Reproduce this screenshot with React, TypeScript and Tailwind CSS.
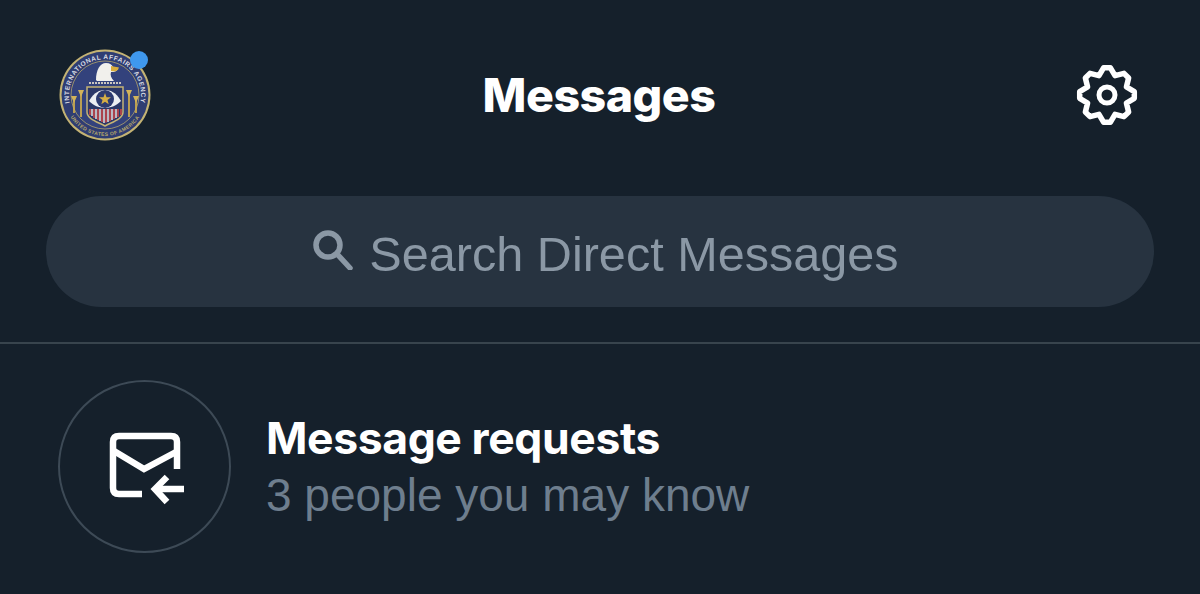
import React from 'react';

// eight-toothed gear outline, centred on 32,32: two corners per tooth, one valley between teeth
const gearPoints = Array.from({ length: 8 }, (_, i) => {
  const base = (i * Math.PI) / 4 - Math.PI / 2;
  const spots: [number, number][] = [
    [base - 0.12, 27.5],
    [base + 0.12, 27.5],
    [base + Math.PI / 8, 21],
  ];
  return spots.map(([a, r]) => `${(32 + r * Math.cos(a)).toFixed(2)},${(32 + r * Math.sin(a)).toFixed(2)}`).join(' ');
}).join(' ');

function Seal() {
  return (
    <svg viewBox="0 0 92 92" className="w-[92px] h-[92px]">
      <defs>
        <path id="sealTop" d="M 14.8 64 A 36 36 0 1 1 77.2 64" />
        <path id="sealBottom" d="M 7.5 60 A 41 41 0 0 0 84.5 60" />
      </defs>
      <circle cx="46" cy="46" r="45.5" fill="#c4b374" />
      <circle cx="46" cy="46" r="43.5" fill="#2f3d72" />
      <circle cx="46" cy="46" r="34" fill="#33427c" stroke="#b3a56d" strokeWidth="0.8" />
      <text fontSize="6.6" fontWeight="700" fill="#d9dbe2" fontFamily="'Liberation Sans', sans-serif">
        <textPath href="#sealTop" startOffset="50%" textAnchor="middle" letterSpacing="0.55">
          INTERNATIONAL AFFAIRS AGENCY
        </textPath>
      </text>
      <text fontSize="5" fontWeight="700" fill="#b9a96a" fontFamily="'Liberation Sans', sans-serif">
        <textPath href="#sealBottom" startOffset="50%" textAnchor="middle" letterSpacing="0.4">
          UNITED STATES OF AMERICA
        </textPath>
      </text>
      {/* eagle */}
      <path d="M37 31 C37 21 41 14 47 14 C51 14 53 16 54 18 L59 19 C58 23 55 23 52 23 C51 26 52 29 55 32 L38 32 Z" fill="#f1f0ec" />
      <path d="M52 17 L60 18.5 C59 22 56 23 52 22 Z" fill="#d8ac3c" />
      {/* perch */}
      <path d="M30 34 H62" stroke="#c9c5c0" strokeWidth="2" strokeDasharray="2 1" />
      {/* shield */}
      <path d="M28 38 H64 V63 C64 70 53 73 46 77 C39 73 28 70 28 63 Z" fill="#2b3768" stroke="#c4b374" strokeWidth="1.5" />
      <path d="M30 52 C35 43 41 41 46 41 C51 41 57 43 62 52 C57 57 51 59 46 59 C41 59 35 57 30 52 Z" fill="#eceef2" />
      <circle cx="46" cy="50" r="9" fill="#2d3a70" />
      <path d="M46 44 L47.5 48.2 L52 48.3 L48.5 51 L49.7 55.3 L46 52.8 L42.3 55.3 L43.5 51 L40 48.3 L44.5 48.2 Z" fill="#d6ae45" />
      <path d="M31 60 V66 M35 60 V69 M39 60 V71 M43 60 V73 M47 60 V73.5 M51 60 V72 M55 60 V70 M59 60 V68 M62 60 V66" stroke="#b8454a" strokeWidth="1.8" />
      <path d="M33 60 V67 M37 60 V70 M41 60 V72 M45 60 V74 M49 60 V73 M53 60 V71 M57 60 V69" stroke="#e9e4e0" strokeWidth="1.5" />
      {/* arrows either side */}
      <path d="M22 42 V68 M70 42 V68 M15 48 V64 M77 48 V64" stroke="#c9a94f" strokeWidth="1.8" />
      <path d="M19 41 H25 L22 48 Z M67 41 H73 L70 48 Z M12 47 H18 L15 54 Z M74 47 H80 L77 54 Z" fill="#d2b35a" />
    </svg>
  );
}

export default function App() {
  return (
    <div className="w-[1200px] h-[594px] overflow-hidden bg-[#15202b] text-white font-['Liberation_Sans',sans-serif]">
      {/* Header */}
      <div className="h-[190px] pl-[59px] pr-[61px] flex items-center justify-between">
        <div className="relative w-[92px] h-[92px]">
          <Seal />
          <span className="absolute left-[71px] top-[2px] w-[18px] h-[18px] rounded-full bg-[#3f98ee]"></span>
        </div>
        <h1 className="font-['Inter',sans-serif] font-extrabold text-[46.5px] leading-none tracking-[-0.5px]">Messages</h1>
        <div className="w-[92px] flex justify-end">
          <svg viewBox="0 0 64 64" className="w-[64px] h-[64px]" fill="none" stroke="#ffffff">
            <polygon points={gearPoints} strokeWidth="5.5" strokeLinejoin="round" />
            <circle cx="32" cy="32" r="8" strokeWidth="5" />
          </svg>
        </div>
      </div>

      {/* Search */}
      <div className="px-[46px] pt-[6px]">
        <div className="h-[111px] rounded-full bg-[#273340] flex items-center justify-center gap-[16px] pl-[12px]">
          <svg viewBox="0 0 40 40" className="w-[40px] h-[40px] -mt-[4px]" fill="none" stroke="#8b98a5" strokeWidth="5.5">
            <circle cx="15" cy="15" r="12" />
            <path d="M24 24 L37 38" strokeLinecap="round" />
          </svg>
          <span className="mt-[5px] text-[48.6px] leading-none text-[#8b98a5]">Search Direct Messages</span>
        </div>
      </div>

      {/* Divider */}
      <div className="mt-[35px] h-[2px] bg-[#38444d]"></div>

      {/* Message requests */}
      <div className="mt-[36px] pl-[58px] flex items-center gap-[35px]">
        <div className="w-[173px] h-[173px] rounded-full border-2 border-[#3d4a56] flex items-center justify-center">
          <svg viewBox="100 425 90 85" className="w-[90px] h-[85px]" fill="none" stroke="#ffffff" strokeWidth="6.5">
            <path d="M177 470 V443 Q177 437 171 437 H119 Q113 437 113 443 V489 Q113 495 119 495 H142" />
            <path d="M114 452 L144 470 L176 453" />
            <path d="M184 490 H156" />
            <path d="M167 478 L155 490 L167 503" />
          </svg>
        </div>
        <div className="flex flex-col">
          <span className="font-['Inter',sans-serif] font-bold text-[44.5px] leading-[57px] tracking-[-0.4px]">Message requests</span>
          <span className="text-[46px] leading-[57px] text-[#6e7e8e]">3 people you may know</span>
        </div>
      </div>
    </div>
  );
}
